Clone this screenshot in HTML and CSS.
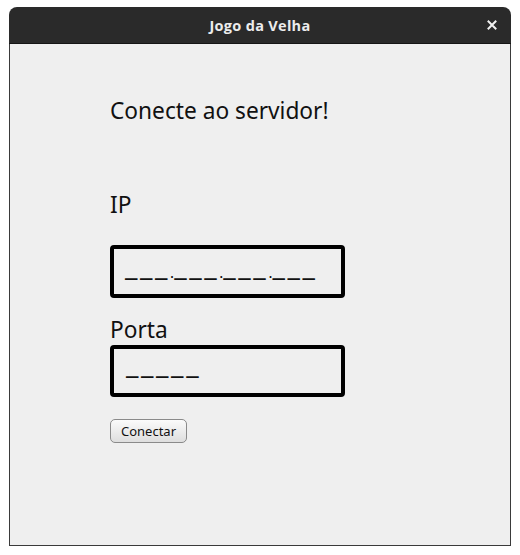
FILE: index.html
```html
<!DOCTYPE html>
<html lang="pt">
<head>
<meta charset="utf-8">
<title>Jogo da Velha</title>
<link rel="stylesheet" href="styles.css">
</head>
<body>
<div class="window">
  <div class="titlebar">
    <span class="title">Jogo da Velha</span>
    <span class="close" aria-label="Fechar">
      <svg width="10" height="10" viewBox="0 0 10 10"><path d="M1.5 1.5 L8.5 8.5 M8.5 1.5 L1.5 8.5" stroke="#f0f0f0" stroke-width="2" stroke-linecap="square"/></svg>
    </span>
  </div>
  <div class="content">
    <div class="heading">Conecte ao servidor!</div>
    <div class="label label-ip">IP</div>
    <div class="field field-ip"><span class="mask">___<span class="dot">.</span>___<span class="dot">.</span>___<span class="dot">.</span>___</span></div>
    <div class="label label-porta">Porta</div>
    <div class="field field-porta"><span class="mask">_____</span></div>
    <button class="btn">Conectar</button>
  </div>
</div>
</body>
</html>
```
FILE: styles.css
```css
html, body {
  margin: 0;
  padding: 0;
  background: #ffffff;
}
body {
  font-family: "Noto Sans", "DejaVu Sans", sans-serif;
}
.window {
  margin: 7px 0 0 9px;
  width: 502px;
  height: 539px;
  box-sizing: border-box;
  display: flex;
  flex-direction: column;
  border-radius: 8px 8px 0 0;
  overflow: hidden;
}
.titlebar {
  height: 37px;
  box-sizing: border-box;
  background: #2a2a2a;
  border-bottom: 1px solid #151515;
  display: flex;
  align-items: center;
  justify-content: center;
  position: relative;
}
.title {
  color: #ececec;
  font-family: "Open Sans", "Noto Sans", sans-serif;
  font-weight: 700;
  font-size: 14.5px;
  letter-spacing: 0.3px;
}
.close {
  position: absolute;
  right: 14px;
  top: 13px;
  width: 10px;
  height: 10px;
  display: flex;
}
.content {
  flex: 1;
  background: #efefef;
  border: 1px solid #3a3a3a;
  border-top: none;
  display: flex;
  flex-direction: column;
  align-items: flex-start;
  padding-left: 100px;
}
.heading {
  margin-top: 53px;
  font-size: 22.7px;
  line-height: 28px;
  color: #111;
}
.label {
  font-size: 22.7px;
  line-height: 28px;
  color: #111;
}
.label-ip { margin-top: 66px; }
.label-porta { margin-top: 18px; }
.field {
  width: 235px;
  box-sizing: border-box;
  border: 4px solid #000;
  border-radius: 4px;
  padding-left: 11px;
  display: flex;
  align-items: flex-start;
}
.field-ip { margin-top: 26px; height: 53px; }
.field-porta { margin-top: 1px; height: 52px; padding-left: 12px; }
.mask {
  font-size: 28px;
  line-height: 33.5px;
  color: #111;
  letter-spacing: 2.6px;
  white-space: pre;
}
.field-porta .mask {
  line-height: 28.5px;
}
.dot {
  font-size: 15px;
  letter-spacing: 0;
  color: #000;
  position: relative;
  top: 2px;
}
.btn {
  margin-top: 22px;
  width: 77px;
  height: 24px;
  box-sizing: border-box;
  border: 1px solid #8a8a8a;
  border-radius: 5px;
  background: linear-gradient(#fbfbfb, #dedede);
  font-family: "Noto Sans", "DejaVu Sans", sans-serif;
  font-size: 13px;
  color: #111;
  padding: 0;
}
```
